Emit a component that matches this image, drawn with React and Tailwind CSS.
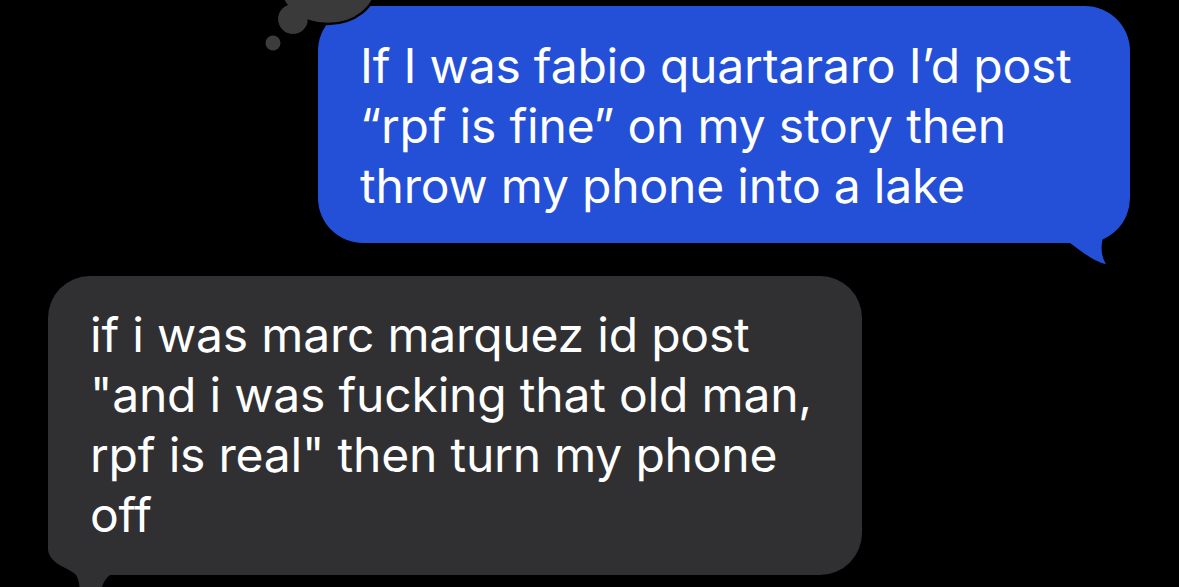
import React from "react";

const font = { fontFamily: '"Inter", "Liberation Sans", sans-serif' };

export default function App() {
  return (
    <div className="relative w-[1179px] h-[587px] bg-black overflow-hidden flex flex-col" style={font}>
      {/* Blue outgoing bubble */}
      <div className="relative self-end mr-[49px] mt-[6px] w-[812px] rounded-[45px] bg-[#2350d7] pl-[42px] pr-[20px] pt-[30px] pb-[27px] text-white text-[48px] leading-[60px] tracking-[-0.2px]">
        <svg className="absolute right-0 bottom-0 overflow-visible" width="80" height="100" viewBox="0 0 80 100">
          <path
            d="M80,27 L80,47 C78,67 60,79 53,95 C50,105 52,115 56,121 C45,119 32,109 20,100 L0,100 L0,27 Z"
            fill="#2350d7"
          />
        </svg>
        <div className="relative whitespace-nowrap">If I was fabio quartararo I’d post</div>
        <div className="relative whitespace-nowrap">“rpf is fine” on my story then</div>
        <div className="relative whitespace-nowrap">throw my phone into a lake</div>
      </div>

      {/* Gray incoming bubble */}
      <div className="relative self-start ml-[48px] mt-[33px] w-[814px] rounded-[42px] bg-[#303032] pl-[42px] pr-[20px] pt-[29px] pb-[30px] text-white text-[48px] leading-[60px] tracking-[-0.2px]">
        <svg className="absolute left-0 bottom-0 overflow-visible" width="80" height="100" viewBox="0 0 80 100">
          <path
            d="M0,20 L0,75 C2,90 22,93 28,100 C31,105 32,110 32,125 L52,125 C52,115 55,105 62,100 L80,100 L80,20 Z"
            fill="#303032"
          />
        </svg>
        <div className="relative whitespace-nowrap">if i was marc marquez id post</div>
        <div className="relative whitespace-nowrap">"and i was fucking that old man,</div>
        <div className="relative whitespace-nowrap">rpf is real" then turn my phone</div>
        <div className="relative whitespace-nowrap">off</div>
      </div>

      {/* Thought bubble decoration */}
      <svg className="absolute left-[240px] top-0" width="160" height="60" viewBox="0 0 160 60">
        <g fill="#3a3a3b" stroke="#000" strokeWidth="2.5">
          <circle cx="53" cy="19" r="16" />
          <ellipse cx="88" cy="-14" rx="48" ry="38" />
        </g>
        <g fill="#3a3a3b">
          <circle cx="53" cy="19" r="14.7" />
        </g>
        <circle cx="33" cy="43" r="7.5" fill="#3c3c3d" />
      </svg>
    </div>
  );
}
